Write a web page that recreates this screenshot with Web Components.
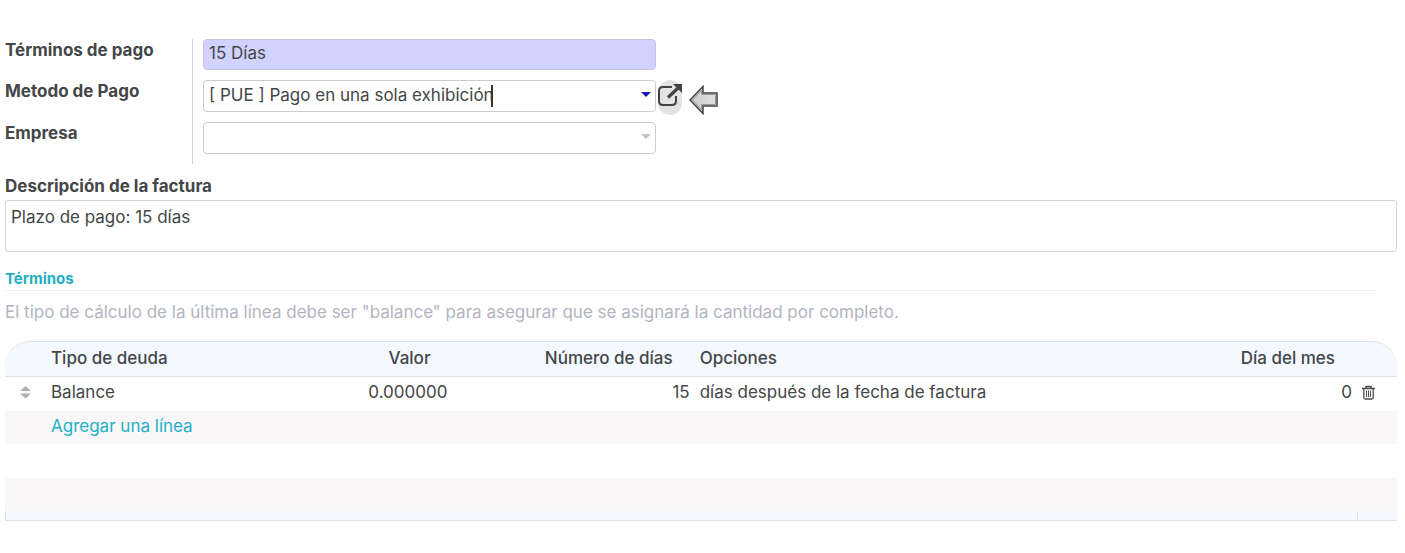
<!DOCTYPE html>
<html lang="es">
<head>
<meta charset="utf-8">
<title>Términos de pago</title>
<style>
  body { margin: 0; background: #fff; color: #444648; font: 17px/24px Inter, "Open Sans", sans-serif; }
</style>
</head>
<body>
<payment-term-form></payment-term-form>

<template id="form-tpl">
  <style>
    :host { display: block; padding: 39px 8px 32px 5px; }
    .notes { margin-top: 11px; }
  </style>
  <field-group>
    <form-field label="Términos de pago" value="15 Días" kind="required"></form-field>
    <form-field label="Metodo de Pago" value="[ PUE ] Pago en una sola exhibición" kind="active"></form-field>
    <form-field label="Empresa" value="" kind="combo"></form-field>
  </field-group>
  <invoice-note class="notes" label="Descripción de la factura" value="Plazo de pago: 15 días"></invoice-note>
  <section-title>Términos</section-title>
  <help-text>El tipo de cálculo de la última línea debe ser "balance" para asegurar que se asignará la cantidad por completo.</help-text>
  <term-lines></term-lines>
</template>

<template id="group-tpl">
  <style>
    :host { display: block; background: linear-gradient(#ced2dc, #ced2dc) 187px 0 / 1px 100% no-repeat; }
  </style>
  <slot></slot>
</template>

<template id="field-tpl">
  <style>
    :host { display: grid; grid-template-columns: 198px minmax(0, 453px) auto 1fr; align-items: start; padding-bottom: 10px; }
    label { font-weight: 700; line-height: 22px; }
    .box { position: relative; }
    input { display: block; box-sizing: border-box; width: 100%; height: 32px; margin: 0; padding: 0 20px 2px 5px;
      border: 1px solid #ccc; border-radius: 4px; background: #fff; color: inherit; font: inherit; outline: none; }
    .arrow { position: absolute; right: 5px; top: 12px; width: 10px; height: 5px; fill: #c4c4c4; display: none; }
    .caret { position: absolute; left: 288px; top: 5px; width: 2px; height: 22px; background: #333; display: none; }
    .tools { display: none; align-items: center; gap: 7px; height: 34px; margin: 0 0 -2px 2px; }
    button { width: 24px; height: 35px; padding: 0; border: 0; border-radius: 12px; background: #e3e3e3; color: #404244; }
    button svg { display: block; overflow: visible; margin-top: -4px; }
    .pointer { margin-top: 6px; }
    :host([kind="required"]) input { height: 31px; padding-bottom: 3px; background: #d1d2ff; border-color: #c4c5d8; }
    :host([kind="combo"]) .arrow, :host([kind="active"]) .arrow { display: block; }
    :host([kind="active"]) .arrow { fill: #1717b5; }
    :host([kind="active"]) .caret { display: block; }
    :host([kind="active"]) .tools { display: flex; }
  </style>
  <label for="control"></label>
  <div class="box">
    <input id="control" type="text">
    <svg class="arrow" viewBox="0 0 10 5" aria-hidden="true"><path d="M0 0h10L5 5z"/></svg>
    <span class="caret"></span>
  </div>
  <div class="tools">
    <button type="button" aria-label="Abrir registro">
      <svg width="24" height="24" viewBox="0 0 24 24" fill="none" stroke="currentColor">
        <path d="M14 4H5Q1 4 1 8v10q0 4 4 4h9q4 0 4-4v-5" stroke-width="2"/>
        <path d="M10 14.5L20 5" stroke-width="3.2"/>
        <path d="M15 1h9v9z" fill="currentColor" stroke="none"/>
      </svg>
    </button>
    <svg class="pointer" width="30" height="30" viewBox="0 0 30 30" aria-hidden="true">
      <defs><linearGradient id="g" x1="0" x2="1"><stop offset="0" stop-color="#ccc"/><stop offset="1" stop-color="#e0e0e0"/></linearGradient></defs>
      <path d="M1 15L14 1.500V8h14v13H14v7.500z" fill="url(#g)" stroke="#444" stroke-width="1.500"/>
      <path d="M3.500 15L12.500 5.500V9.500H26.500v10H12.500v5z" fill="none" stroke="#999" stroke-width="1"/>
    </svg>
  </div>
</template>

<template id="note-tpl">
  <style>
    :host { display: block; }
    label { display: block; font-weight: 700; line-height: 22px; padding-bottom: 3px; }
    textarea { display: block; box-sizing: border-box; width: 100%; height: 52px; margin: 0; padding: 4px 5px;
      border: 1px solid #d6d6d6; border-radius: 3px; background: #fff; color: inherit; font: inherit; resize: none; outline: none; }
  </style>
  <label for="note"></label>
  <textarea id="note"></textarea>
</template>

<template id="title-tpl">
  <style>
    :host { display: block; margin: 16px 21px 0 0; border-bottom: 1px solid #f0f0f0; }
    h2 { margin: 0; padding-bottom: 1px; color: #1fb0c5; font-size: 15px; line-height: 21px; font-weight: 700; }
  </style>
  <h2><slot></slot></h2>
</template>

<template id="help-tpl">
  <style>
    :host { display: block; margin: 9px 0 17px; color: #b1b5bf; }
  </style>
  <slot></slot>
</template>

<template id="lines-tpl">
  <style>
    :host { display: block; }
    table { width: 100%; table-layout: fixed; border-collapse: separate; border-spacing: 0; }
    .handle { width: 41px; } .kind { width: 14%; } .value { width: 15.2%; } .days { width: 17.4%; }
    .day { width: 12%; } .trash { width: 40px; }
    th, td { box-sizing: border-box; padding: 0 5px; text-align: left; white-space: nowrap; }
    th { height: 36px; padding-bottom: 2px; background: #f4f8ff; border-top: 1px solid #dee0e5; border-bottom: 1px solid #dee0e5; font-weight: 500; }
    th:first-child { border-top-left-radius: 25px; }
    th:last-child { border-top-right-radius: 25px; }
    .num { text-align: right; }
    th.num { padding-right: 22px; }
    tbody td { height: 34px; padding-bottom: 4px; }
    tbody tr:nth-child(n+2) td { height: 33px; }
    tbody tr:nth-child(3) td { height: 34px; }
    tbody tr:nth-child(even) td { background: #f9f7f8; }
    tfoot td { height: 10px; background: #f4f8ff; border-bottom: 1px solid #dee0e5; }
    tfoot td:first-child, tfoot td:last-child { border-left: 1px solid #dee0e5; }
    a { color: #1fb0c5; text-decoration: none; }
    svg { display: block; }
    .grip { margin-left: 10px; fill: #aaafb9; }
    button { display: block; padding: 0; border: 0; background: none; color: #4b4d50; }
  </style>
  <table>
    <colgroup><col class="handle"><col class="kind"><col class="value"><col class="days"><col><col class="day"><col class="trash"></colgroup>
    <thead>
      <tr><th></th><th>Tipo de deuda</th><th class="num">Valor</th><th class="num">Número de días</th><th>Opciones</th><th class="num">Día del mes</th><th></th></tr>
    </thead>
    <tbody>
      <tr>
        <td><svg class="grip" width="11" height="14" viewBox="0 0 11 14" aria-hidden="true"><path d="M5.500 1L11 6H0zM0 8.500h11L5.500 13.500z"/></svg></td>
        <td>Balance</td><td class="num">0.000000</td><td class="num">15</td><td>días después de la fecha de factura</td><td class="num">0</td>
        <td><button type="button" aria-label="Eliminar"><svg width="13" height="15" viewBox="0 0 13 15" fill="none" stroke="currentColor">
          <path d="M0 3.500h13M4 3V1.500h5V3" stroke-width="1.500"/><path d="M1.800 4v8.500q0 1.500 1.500 1.500h6.400q1.500 0 1.500-1.500V4" stroke-width="1.300"/><path d="M4.500 5.500v6.500M6.500 5.500v6.500M8.500 5.500v6.500"/></svg></button></td>
      </tr>
      <tr><td></td><td colspan="6"><a href="#">Agregar una línea</a></td></tr>
      <tr><td colspan="7"></td></tr>
      <tr><td colspan="7"></td></tr>
    </tbody>
    <tfoot><tr><td colspan="6"></td><td></td></tr></tfoot>
  </table>
</template>

<script>
  class TemplateElement extends HTMLElement {
    constructor() {
      super();
      const tpl = document.getElementById(this.constructor.template);
      this.attachShadow({ mode: "open" }).append(tpl.content.cloneNode(true));
    }
  }
  class FieldGroup extends TemplateElement { static template = "group-tpl"; }
  class FormField extends TemplateElement {
    static template = "field-tpl";
    connectedCallback() {
      this.shadowRoot.querySelector("label").textContent = this.getAttribute("label");
      const input = this.shadowRoot.querySelector("input");
      input.value = this.getAttribute("value");
      if (this.getAttribute("kind") !== "required") input.setAttribute("role", "combobox");
    }
  }
  class InvoiceNote extends TemplateElement {
    static template = "note-tpl";
    connectedCallback() {
      this.shadowRoot.querySelector("label").textContent = this.getAttribute("label");
      this.shadowRoot.querySelector("textarea").value = this.getAttribute("value");
    }
  }
  class SectionTitle extends TemplateElement { static template = "title-tpl"; }
  class HelpText extends TemplateElement { static template = "help-tpl"; }
  class TermLines extends TemplateElement { static template = "lines-tpl"; }
  class PaymentTermForm extends TemplateElement { static template = "form-tpl"; }

  customElements.define("field-group", FieldGroup);
  customElements.define("form-field", FormField);
  customElements.define("invoice-note", InvoiceNote);
  customElements.define("section-title", SectionTitle);
  customElements.define("help-text", HelpText);
  customElements.define("term-lines", TermLines);
  customElements.define("payment-term-form", PaymentTermForm);
</script>
</body>
</html>
